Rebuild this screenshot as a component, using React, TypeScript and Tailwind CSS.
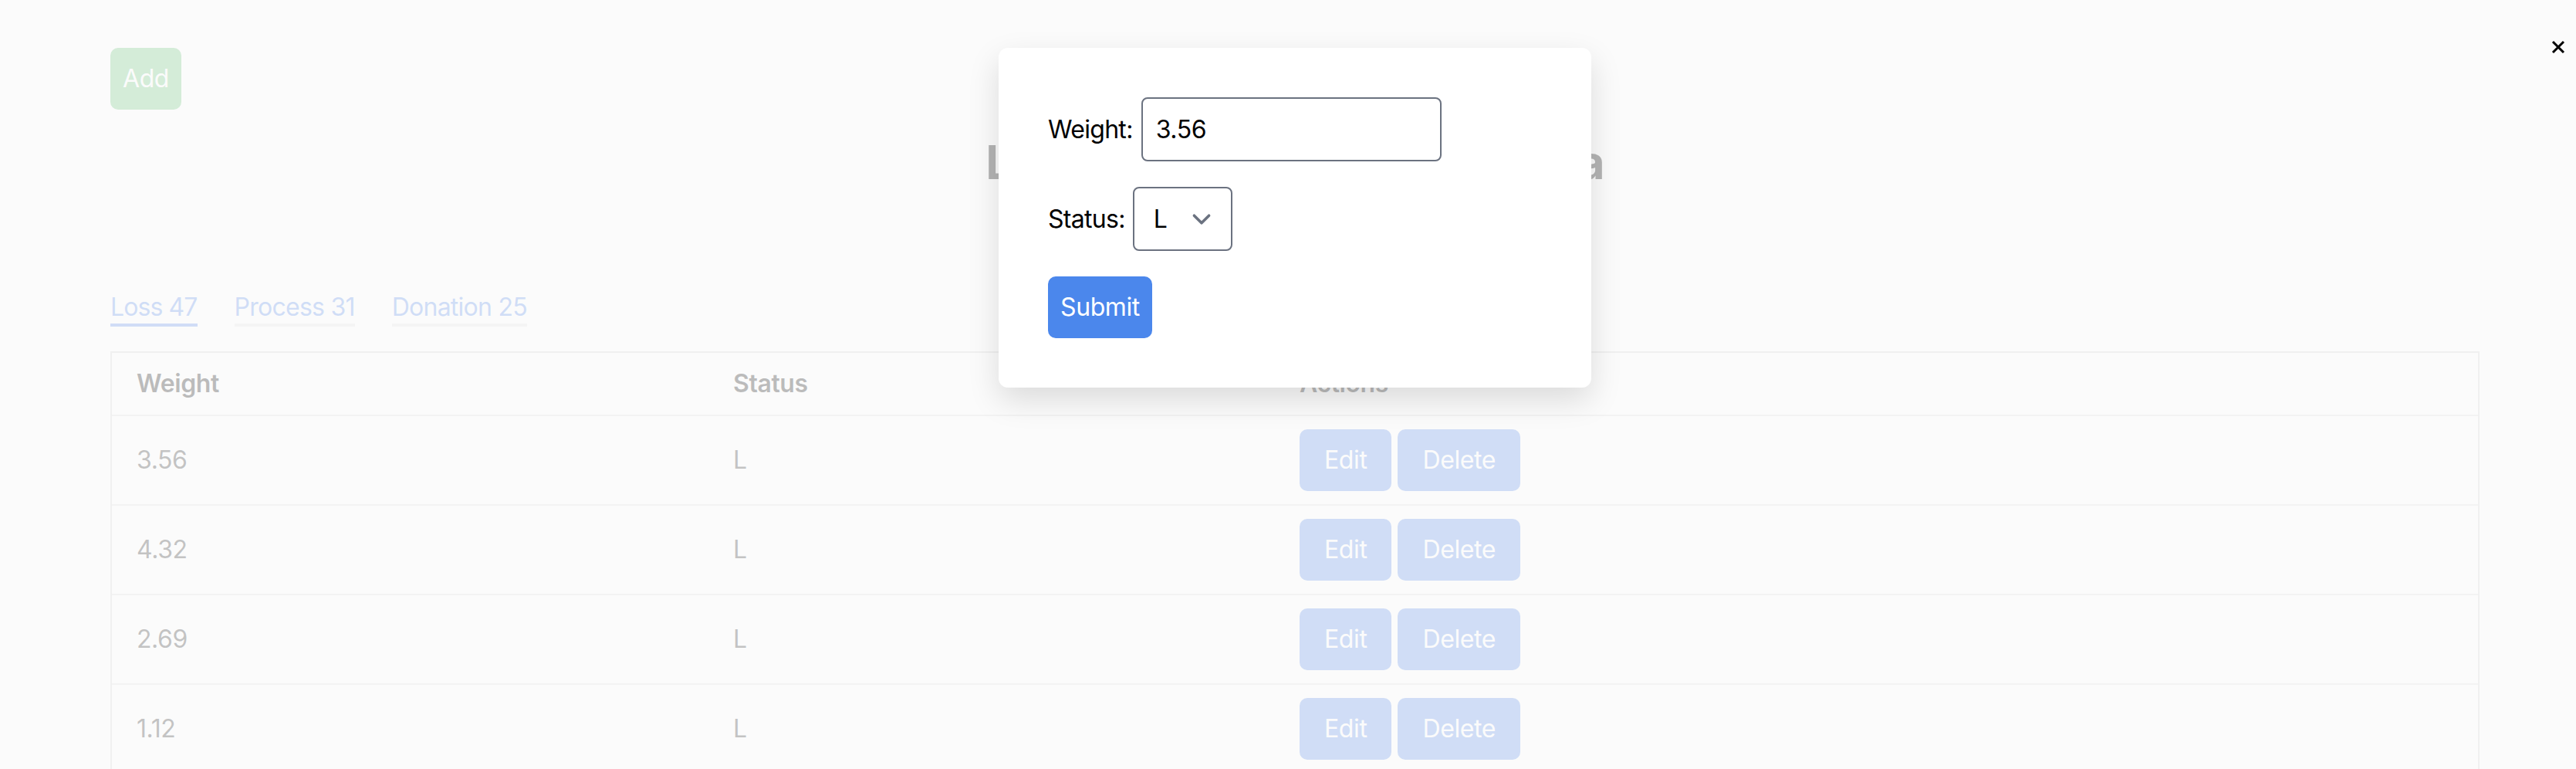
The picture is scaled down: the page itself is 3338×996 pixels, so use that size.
import React from "react";

const rows = ["3.56", "4.32", "2.69", "1.12", "2.05"];

function Chevron() {
  return (
    <svg width="48" height="48" viewBox="0 0 20 20" fill="none" className="pointer-events-none absolute right-[16px] top-1/2 -translate-y-1/2">
      <path d="M6 8l4 4 4-4" stroke="#6b7280" strokeWidth="1.5" strokeLinecap="round" strokeLinejoin="round" />
    </svg>
  );
}

export default function App() {
  return (
    <div className="relative h-[996px] w-full overflow-hidden bg-white font-['Inter',sans-serif] text-black">
      <div className="ml-[143px] w-[3070px] pt-[62px]">
        <button className="h-[80px] rounded-[10px] bg-[#72c881] px-[16px] text-[32px] leading-[48px] tracking-[-0.4px] text-white">
          Add
        </button>
        <h1 className="mt-[32px] text-center text-[60px] font-bold leading-[72px] tracking-[-0.7px] text-black">
          Lost and Found Weight Data
        </h1>
        <div className="mt-[129px] flex h-[48px] gap-[48px] pt-[5px]">
          <span className="border-b-4 border-[#6495ed] text-[32px] leading-[36px] tracking-[-0.9px] text-[#6495ed]">Loss 47</span>
          <span className="border-b-4 border-[#e5e5e5] text-[32px] leading-[36px] tracking-[-0.75px] text-[#6495ed]">Process 31</span>
          <span className="border-b-4 border-[#e5e5e5] text-[32px] leading-[36px] tracking-[-0.75px] text-[#6495ed]">Donation 25</span>
        </div>
        <div className="mt-[32px] border-2 border-[#d6d6d6]">
          <div className="grid h-[82px] grid-cols-[773px_734px_1fr] items-center border-b-2 border-[#e3e3e3] text-[32px] font-semibold leading-[48px] tracking-[-0.4px] text-[#1a1a1a]">
            <div className="px-[32px]">Weight</div>
            <div className="px-[32px]">Status</div>
            <div className="px-[32px]">Actions</div>
          </div>
          {rows.map((w) => (
            <div key={w} className="grid h-[116px] grid-cols-[773px_734px_1fr] items-center border-b-2 border-[#e3e3e3] text-[32px] leading-[48px] tracking-[-0.4px] text-[#383838]">
              <div className="px-[32px]">{w}</div>
              <div className="px-[32px]">L</div>
              <div className="flex gap-[8px] px-[32px]">
                <button className="h-[80px] rounded-[10px] bg-[#6495ed] px-[32px] text-[32px] leading-[48px] tracking-[-0.4px] text-white">Edit</button>
                <button className="h-[80px] rounded-[10px] bg-[#6495ed] px-[32px] text-[32px] leading-[48px] tracking-[-0.4px] text-white">Delete</button>
              </div>
            </div>
          ))}
        </div>
      </div>

      <div className="absolute inset-0 bg-[#fafafa]/[0.72]" />

      <div className="absolute left-[1294px] top-[62px] w-[768px] rounded-[12px] bg-white p-[64px] shadow-[0_16px_40px_rgba(0,0,0,0.13)]">
        <div className="flex items-center gap-[11px]">
          <label className="text-[32px] leading-[48px] tracking-[-0.7px] text-black">Weight:</label>
          <input
            readOnly
            value="3.56"
            className="h-[83px] w-[389px] rounded-[8px] border-2 border-[#6b7280] bg-white px-[17px] text-[32px] leading-[48px] tracking-[-0.4px] text-black outline-none"
          />
        </div>
        <div className="mt-[33px] flex items-center gap-[10px]">
          <label className="text-[32px] leading-[48px] tracking-[-0.7px] text-black">Status:</label>
          <div className="relative">
            <select
              defaultValue="L"
              className="h-[83px] w-[129px] appearance-none rounded-[8px] border-2 border-[#6b7280] bg-white pl-[25px] text-[32px] leading-[48px] text-black outline-none"
            >
              <option value="L">L</option>
              <option value="P">P</option>
              <option value="D">D</option>
            </select>
            <Chevron />
          </div>
        </div>
        <button className="mt-[33px] h-[80px] rounded-[10px] bg-[#4b87ec] px-[16px] text-[32px] leading-[48px] tracking-[-0.4px] text-white">
          Submit
        </button>
      </div>

      <button className="absolute left-[3303px] top-[49px] flex h-[24px] w-[24px] items-center justify-center" aria-label="Close">
        <svg width="18" height="18" viewBox="0 0 18 18" fill="none">
          <path d="M2 2L16 16M16 2L2 16" stroke="#000" strokeWidth="3" />
        </svg>
      </button>
    </div>
  );
}
